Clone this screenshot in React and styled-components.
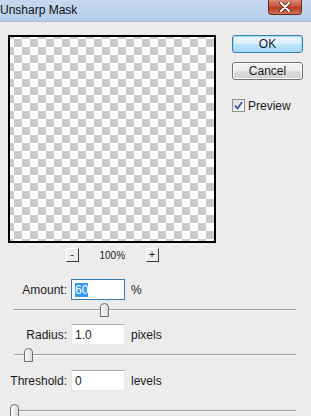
import React from 'react'
import styled, { createGlobalStyle } from 'styled-components'

const Global = createGlobalStyle`
  html, body { margin: 0; padding: 0; background: #ececec; }
  body { font-family: "Liberation Sans", Arial, sans-serif; }
`

const Window = styled.div`
  width: 311px;
  height: 416px;
  overflow: hidden;
  background: #ececec;
  color: #1b1b1b;
  font-size: 12px;
`

const TitleBar = styled.div`
  height: 21px;
  display: flex;
  justify-content: space-between;
  align-items: flex-start;
  background: linear-gradient(to bottom, #c6d9ef 0%, #bcd2eb 60%, #b3cbe6 100%);
  border-bottom: 1px solid #a7bbd3;
`

const Title = styled.div`
  font-size: 12px;
  line-height: 21px;
  padding-left: 0;
  color: #101010;
`

const CloseBtn = styled.div`
  width: 34px;
  height: 15px;
  margin-right: 9px;
  box-sizing: border-box;
  border: 1px solid #6b2a1e;
  border-top: none;
  border-radius: 0 0 4px 4px;
  background: linear-gradient(to bottom, #d88878 0%, #c9553f 45%, #b83a22 55%, #d0705a 100%);
  display: flex;
  align-items: center;
  justify-content: center;
`

const Top = styled.div`
  display: flex;
  gap: 16px;
  padding: 13px 0 0 8px;
`

const PreviewCol = styled.div`
  display: flex;
  flex-direction: column;
  width: 208px;
`

const Preview = styled.div`
  width: 208px;
  height: 208px;
  box-sizing: border-box;
  border: 2px solid #000;
  background-color: #fff;
  background-image: conic-gradient(#fff 25%, #cbcbcb 0 50%, #fff 0 75%, #cbcbcb 0);
  background-size: 16px 16px;
  background-position: -4px -6px;
`

const ZoomBar = styled.div`
  margin-top: 5px;
  height: 14px;
  display: flex;
  justify-content: center;
  align-items: center;
`

const ZoomBtn = styled.div`
  width: 13px;
  height: 14px;
  box-sizing: border-box;
  border: 1px solid;
  border-color: #fff #3a3a3a #3a3a3a #fff;
  background: #ececec;
  font-size: 11px;
  line-height: 11px;
  text-align: center;
`

const ZoomText = styled.div`
  font-size: 10px;
  margin: 0 ${p => p.$gap}px;
  width: 25px;
  text-align: center;
`

const Side = styled.div`
  width: 71px;
  display: flex;
  flex-direction: column;
`

const Button = styled.div`
  height: 18px;
  box-sizing: border-box;
  border-radius: 3px;
  display: flex;
  align-items: center;
  justify-content: center;
  font-size: 12px;
  border: 1px solid ${p => (p.$primary ? '#3c7fb1' : '#707070')};
  background: ${p =>
    p.$primary
      ? 'linear-gradient(to bottom, #eaf6fd 0%, #d9f0fc 50%, #bee6fd 52%, #a7d9f5 100%)'
      : 'linear-gradient(to bottom, #f2f2f2 0%, #ebebeb 50%, #dddddd 52%, #cfcfcf 100%)'};
  box-shadow: ${p => (p.$primary ? 'inset 0 0 0 1px #9ed8f5' : 'inset 0 0 0 1px #fcfcfc')};
  margin-bottom: ${p => p.$mb || 0}px;
`

const CheckRow = styled.label`
  display: flex;
  align-items: center;
  gap: 3px;
  height: 13px;
  font-size: 12px;
`

const CheckBox = styled.div`
  width: 13px;
  height: 13px;
  box-sizing: border-box;
  border: 1px solid #8e8f8f;
  background: linear-gradient(135deg, #dcdcdc, #fbfbfb);
  display: flex;
  align-items: center;
  justify-content: center;
`

const Params = styled.div`
  margin-top: 17px;
  display: flex;
  flex-direction: column;
`

const Row = styled.div`
  display: grid;
  grid-template-columns: 67px 54px auto;
  column-gap: 4px;
  align-items: center;
  height: 21px;
  margin-top: ${p => p.$mt || 0}px;
`

const Label = styled.div`
  text-align: right;
  font-size: 12px;
`

const Field = styled.div`
  height: 21px;
  box-sizing: border-box;
  border: 1px solid ${p => (p.$focus ? '#3d7bad' : '#e3e9ef')};
  border-top-color: ${p => (p.$focus ? '#3d7bad' : '#abadb3')};
  background: #fff;
  padding-left: 3px;
  display: flex;
  align-items: center;
  font-size: 12px;
`

const Selected = styled.span`
  background: #3399ff;
  color: #fff;
  line-height: 14px;
`

const Unit = styled.div`
  margin-left: 2px;
  font-size: 12px;
`

const Track = styled.div`
  position: relative;
  height: 14px;
  margin: ${p => p.$mt || 3}px 15px 0 14px;
  padding-top: 6px;
  box-sizing: border-box;
`

const Rail = styled.div`
  height: 2px;
  box-sizing: border-box;
  border-top: 1px solid #9c9c9c;
  border-bottom: 1px solid #fafafa;
`

const Thumb = styled.svg`
  position: absolute;
  top: 0;
  left: ${p => p.$pos - 4.5}px;
`

const ThumbIcon = ({ pos }) => (
  <Thumb $pos={pos} width="9" height="14" viewBox="0 0 9 14">
    <defs>
      <linearGradient id="tg" x1="0" y1="0" x2="1" y2="0">
        <stop offset="0" stopColor="#ffffff" />
        <stop offset="1" stopColor="#d8d8d8" />
      </linearGradient>
    </defs>
    <path d="M0.5 13.5 V4 Q0.5 0.5 4.5 0.5 Q8.5 0.5 8.5 4 V13.5 Z" fill="url(#tg)" stroke="#6f6f6f" />
  </Thumb>
)

const Slider = ({ pos, mt }) => (
  <Track $mt={mt}>
    <Rail />
    <ThumbIcon pos={pos} />
  </Track>
)

export default function App() {
  return (
    <Window>
      <Global />
      <TitleBar>
        <Title>Unsharp Mask</Title>
        <CloseBtn>
          <svg width="12" height="10" viewBox="0 0 12 10">
            <path d="M2 1 L10 9 M10 1 L2 9" stroke="#4a1a10" strokeWidth="3.4" strokeLinecap="round" />
            <path d="M2 1 L10 9 M10 1 L2 9" stroke="#ffffff" strokeWidth="2" strokeLinecap="round" />
          </svg>
        </CloseBtn>
      </TitleBar>
      <Top>
        <PreviewCol>
          <Preview />
          <ZoomBar>
            <ZoomBtn>-</ZoomBtn>
            <ZoomText $gap={21}>100%</ZoomText>
            <ZoomBtn>+</ZoomBtn>
          </ZoomBar>
        </PreviewCol>
        <Side>
          <Button $primary $mb={9}>OK</Button>
          <Button $mb={19}>Cancel</Button>
          <CheckRow>
            <CheckBox>
              <svg width="9" height="9" viewBox="0 0 9 9">
                <path d="M1 4.5 L3.5 7.5 L8 1" fill="none" stroke="#3d57a0" strokeWidth="1.8" />
              </svg>
            </CheckBox>
            Preview
          </CheckRow>
        </Side>
      </Top>
      <Params>
        <Row>
          <Label>Amount:</Label>
          <Field $focus><Selected>60</Selected></Field>
          <Unit>%</Unit>
        </Row>
        <Slider pos={90.5} />
        <Row $mt={7}>
          <Label>Radius:</Label>
          <Field>1.0</Field>
          <Unit>pixels</Unit>
        </Row>
        <Slider pos={14.5} />
        <Row $mt={8}>
          <Label>Threshold:</Label>
          <Field>0</Field>
          <Unit>levels</Unit>
        </Row>
        <Slider pos={0} mt={13} />
      </Params>
    </Window>
  )
}
